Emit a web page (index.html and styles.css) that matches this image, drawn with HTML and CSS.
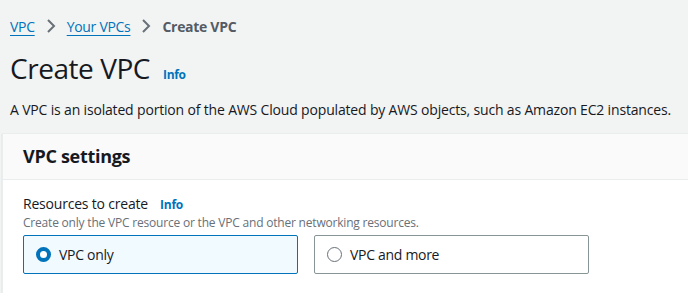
FILE: index.html
```html
<!DOCTYPE html>
<html lang="en">
<head>
    <meta charset="UTF-8">
    <title>Create VPC</title>
    <link rel="stylesheet" href="styles.css">
</head>
<body>
    <nav class="breadcrumbs">
        <a href="#">VPC</a>
        <span class="crumb-sep">
            <svg width="16" height="16" viewBox="0 0 16 16"><path d="M5 2l6 6-6 6" fill="none" stroke="currentColor" stroke-width="2"/></svg>
        </span>
        <a href="#">Your VPCs</a>
        <span class="crumb-sep">
            <svg width="16" height="16" viewBox="0 0 16 16"><path d="M5 2l6 6-6 6" fill="none" stroke="currentColor" stroke-width="2"/></svg>
        </span>
        <span class="crumb-current">Create VPC</span>
    </nav>

    <div class="page-header">
        <h1>Create VPC</h1>
        <a class="info-link" href="#">Info</a>
    </div>
    <p class="page-desc">A VPC is an isolated portion of the AWS Cloud populated by AWS objects, such as Amazon EC2 instances.</p>

    <div class="panel">
        <div class="panel-header">
            <h2>VPC settings</h2>
        </div>
        <div class="panel-body">
            <div class="field-label">
                <span>Resources to create</span>
                <a class="info-link small" href="#">Info</a>
            </div>
            <div class="field-hint">Create only the VPC resource or the VPC and other networking resources.</div>
            <div class="tiles">
                <label class="tile selected">
                    <span class="radio checked"></span>
                    <span>VPC only</span>
                </label>
                <label class="tile">
                    <span class="radio"></span>
                    <span>VPC and more</span>
                </label>
            </div>
        </div>
    </div>
</body>
</html>
```

FILE: styles.css
```css
body {
    margin: 0;
    padding: 0 0 0 10px;
    background: #f2f3f3;
    font-family: 'Open Sans', Arial, sans-serif;
    color: #16191f;
    letter-spacing: -0.3px;
    overflow: hidden;
}
.breadcrumbs {
    display: flex;
    align-items: center;
    height: 20px;
    margin-top: 16px;
    font-size: 14px;
}
.breadcrumbs a {
    color: #0073bb;
    text-decoration: underline;
    text-underline-offset: 3px;
}
.crumb-sep {
    display: flex;
    color: #687078;
    margin: 0 8px;
}
.crumb-current {
    color: #545b64;
    font-weight: 700;
}
.page-header {
    display: flex;
    align-items: baseline;
    margin-top: 14px;
}
h1 {
    margin: 0;
    font-size: 28px;
    font-weight: 400;
    line-height: 36px;
    letter-spacing: -0.45px;
}
.info-link {
    color: #0073bb;
    font-weight: 700;
    font-size: 12px;
    text-decoration: none;
    margin-left: 13px;
}
.page-desc {
    margin: 14px 0 0;
    font-size: 14px;
    line-height: 20px;
    letter-spacing: -0.17px;
    white-space: nowrap;
}
.panel {
    margin: 13px 0 0 -8px;
    background: #fff;
    border-left: 1px solid #eaeded;
    border-top: 1px solid #eaeded;
    box-shadow: 0 1px 1px rgba(0,28,36,0.2);
}
.panel-header {
    background: #fafafa;
    border-bottom: 1px solid #eaeded;
    padding: 10px 20px 11px;
}
h2 {
    margin: 0;
    font-size: 18px;
    line-height: 24px;
    font-weight: 700;
}
.panel-body {
    padding: 14px 20px 20px;
}
.field-label {
    display: flex;
    align-items: baseline;
    font-size: 14px;
    line-height: 20px;
    letter-spacing: -0.2px;
}
.info-link.small {
    margin-left: 12px;
}
.field-hint {
    font-size: 12px;
    line-height: 16px;
    color: #687078;
    letter-spacing: -0.2px;
}
.tiles {
    display: flex;
    gap: 16px;
    margin-top: 4px;
}
.tile {
    display: flex;
    align-items: center;
    gap: 8px;
    width: 275px;
    height: 39px;
    box-sizing: border-box;
    padding: 0 12px;
    border: 1px solid #879596;
    border-radius: 2px;
    font-size: 14px;
}
.tile.selected {
    background: #f1faff;
    border-color: #0073bb;
}
.radio {
    width: 15px;
    height: 15px;
    box-sizing: border-box;
    border: 1.5px solid #687078;
    border-radius: 50%;
}
.radio.checked {
    border: 4.5px solid #0073bb;
    background: #fff;
}
```
